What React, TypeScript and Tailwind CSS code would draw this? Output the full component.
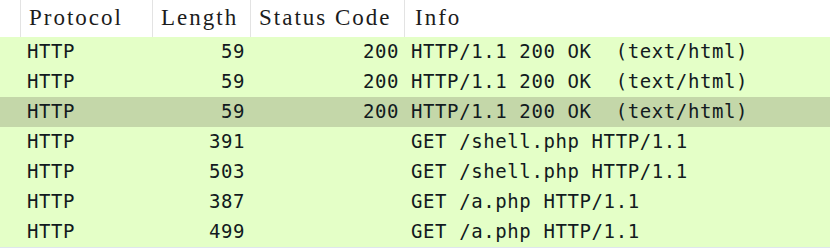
import React from "react";

type Packet = {
  protocol: string;
  length: number;
  status?: number;
  info: string;
};

const packets: Packet[] = [
  { protocol: "HTTP", length: 59, status: 200, info: "HTTP/1.1 200 OK  (text/html)" },
  { protocol: "HTTP", length: 59, status: 200, info: "HTTP/1.1 200 OK  (text/html)" },
  { protocol: "HTTP", length: 59, status: 200, info: "HTTP/1.1 200 OK  (text/html)" },
  { protocol: "HTTP", length: 391, info: "GET /shell.php HTTP/1.1" },
  { protocol: "HTTP", length: 503, info: "GET /shell.php HTTP/1.1" },
  { protocol: "HTTP", length: 387, info: "GET /a.php HTTP/1.1" },
  { protocol: "HTTP", length: 499, info: "GET /a.php HTTP/1.1" },
];

const SELECTED = 2;

const cols = "grid grid-cols-[20px_132px_98px_154px_1fr]";

const App: React.FC = () => {
  return (
    <div className="w-[830px] h-[248px] bg-white overflow-hidden">
      {/* column header */}
      <div
        className={`${cols} h-[37px] bg-white text-[#1c1c1c] text-[23px] leading-[36px] tracking-[2px] font-['Liberation_Serif',serif]`}
      >
        <div />
        <div className="border-l border-[#e3e3e3] pl-2 whitespace-nowrap">Protocol</div>
        <div className="border-l border-[#e3e3e3] pl-2 whitespace-nowrap">Length</div>
        <div className="border-l border-[#e3e3e3] pl-2 whitespace-nowrap">Status Code</div>
        <div className="border-l border-[#e3e3e3] pl-2.5 whitespace-nowrap">Info</div>
      </div>

      {/* packet rows */}
      <div className="font-['DejaVu_Sans_Mono',monospace] text-[19px] tracking-[0.6px] text-[#121a20] border-b border-[#dfe6ee]">
        {packets.map((p, i) => (
          <div
            key={i}
            className={`${cols} h-[30px] leading-[28px] whitespace-pre ${
              i === SELECTED ? "bg-[#c4d7a9]" : "bg-[#e4ffc7]"
            }`}
          >
            <div />
            <div className="pl-[7px]">{p.protocol}</div>
            <div className="text-right pr-[5px]">{p.length}</div>
            <div className="text-right pr-[5px]">{p.status ?? ""}</div>
            <div className="pl-[7px]">{p.info}</div>
          </div>
        ))}
      </div>
    </div>
  );
};

export default App;
